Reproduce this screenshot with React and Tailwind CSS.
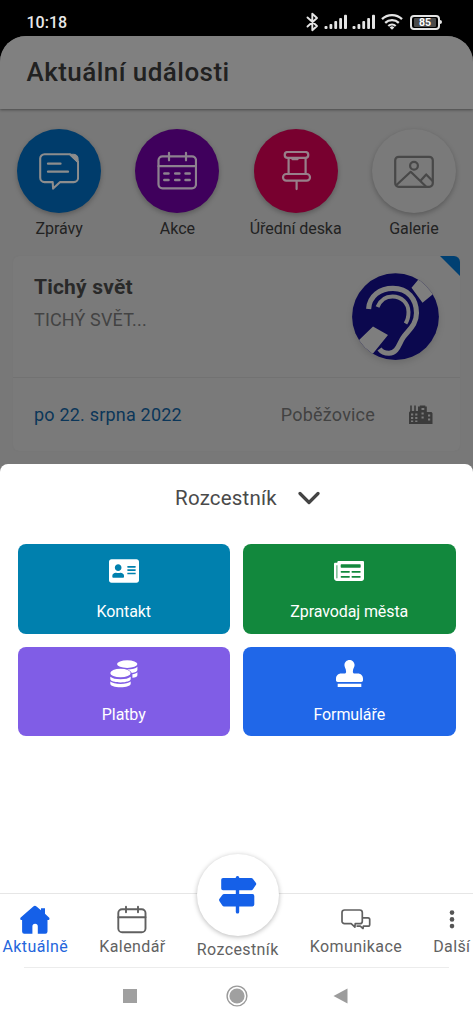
import { FaAddressCard, FaNewspaper, FaStamp } from "react-icons/fa";

const SignalIcon = () => (
  <svg width="24" height="16" viewBox="0 0 24 16" fill="#e4e4e4">
    <rect x="0.5" y="12" width="3" height="3" rx="1" />
    <rect x="5.5" y="10" width="2.8" height="5" rx="1" />
    <rect x="10.3" y="7" width="2.8" height="8" rx="1" />
    <rect x="15.2" y="4" width="2.8" height="11" rx="1" />
    <rect x="20" y="0.8" width="3" height="14.2" rx="1" />
  </svg>
);

const BluetoothIcon = () => (
  <svg width="13" height="20" viewBox="0 0 13 20" fill="none" stroke="#e4e4e4" strokeWidth="1.9" strokeLinejoin="round" strokeLinecap="round">
    <path d="M1.5 5.5 11 14 6.3 18.2V1.8L11 6 1.5 14.5" />
  </svg>
);

const WifiIcon = () => (
  <svg width="22" height="16" viewBox="0 0 22 16" fill="none" stroke="#e4e4e4" strokeWidth="2.3">
    <path d="M1 5.2a14.5 14.5 0 0 1 20 0M4.2 8.8a10 10 0 0 1 13.6 0M7.3 12a5.6 5.6 0 0 1 7.4 0" />
    <path d="M11 15.8 8.7 13.4a3.2 3.2 0 0 1 4.6 0z" fill="#e4e4e4" stroke="none" />
  </svg>
);

const NewsIcon = () => (
  <svg width="40" height="40" viewBox="0 0 40 40" fill="none" stroke="#8d8d8d" strokeWidth="2.1" strokeLinecap="round" strokeLinejoin="round">
    <path d="M31 3.3H5.5A4.3 4.3 0 0 0 1.2 7.6v19.2a4.3 4.3 0 0 0 4.3 4.3h8.2l.4 6.5 7-6.5h13.7a4.3 4.3 0 0 0 4.3-4.3V11z" />
    <path d="M30.5 3.3h4.3a4.3 4.3 0 0 1 4.3 4.3v4z" fill="#8d8d8d" strokeWidth="1" />
    <path d="M9 12.7h12.5M9 20.7h20" strokeWidth="2.3" />
  </svg>
);

const EventsIcon = () => (
  <svg width="40" height="40" viewBox="0 0 40 40" fill="none" stroke="#8d818f" strokeWidth="2.2" strokeLinecap="round">
    <rect x="1.5" y="5.3" width="37.5" height="32" rx="4" />
    <path d="M1.5 15.2H39M12 1.8v7.5M29 1.8v7.5" />
    <path d="M7.3 22.4h4.2M18.2 22.4h4.2M28.5 22.4h4.2M7.3 29h4.2M18.2 29h4.2M28.5 29h4.2" strokeWidth="2.5" />
  </svg>
);

const PinIcon = () => (
  <svg width="40" height="40" viewBox="0 0 40 40" fill="none" stroke="#98808a" strokeWidth="2.2" strokeLinecap="round">
    <rect x="8.7" y="1" width="23.6" height="5.8" rx="2.9" />
    <path d="M12.6 7v15.6M29.6 7v15.6M16.5 8.2h5M20.6 30.5v7.6" />
    <rect x="7" y="23" width="27" height="6.6" rx="3.3" />
  </svg>
);

const GalleryIcon = () => (
  <svg width="40" height="40" viewBox="0 0 40 40" fill="none" stroke="#484848" strokeWidth="2.2" strokeLinejoin="round">
    <rect x="1.2" y="5.8" width="37.6" height="30" rx="3.5" />
    <circle cx="20" cy="14.8" r="3.9" />
    <path d="M2.2 34.2 16.7 20.8 32 35.5M26.5 29.7l5.7-6.3 6.4 6.5" />
  </svg>
);

const EarIcon = () => (
  <svg width="88" height="88" viewBox="0 0 88 88" className="drop-shadow-md">
    <clipPath id="ear">
      <circle cx="43.5" cy="43.7" r="43.4" />
    </clipPath>
    <g clipPath="url(#ear)">
      <path d="M0 0h88v88H0z" fill="#0b084e" />
      <path d="m59.5 14.7 10-12L83 19.5 70.5 29.8zM4 70l17-16.5L36 62 19 83z" fill="#7e7e7e" />
      <g fill="none" stroke="#7e7e7e">
        <path d="M16.6 36C17.5 23 28 15.4 41 15.4 56 15.4 64.5 26 64.5 40c0 12-8 17-13 24C47 70 46 80.2 37 80.2c-5 0-7.5-1.5-9.5-4.2" strokeWidth="5.1" />
        <path d="M25.5 34c3-7.5 8.5-10.6 15-10.6 9 0 16 6.6 16 15.6 0 5-1 8.5-3 11.5" strokeWidth="4" />
      </g>
    </g>
  </svg>
);

const CityIcon = () => (
  <svg width="24" height="20" viewBox="0 0 24 20">
    <path d="M0 19V7.5L1.2 6V.5h1.6V6h2.4V.5h1.6V6H9V1.500h1.800V.5h5.500v1h1.500V7h4.700l1 1.200V19z" fill="#3b3b3b" />
    <path d="M2 8.500h2.200v2H2zM6.200 8.500h2.200v2H6.200zM2 12h2.200v2H2zM6.200 12h2.200v2H6.200zM2 15.500h2.200v1.500H2zM6.200 15.500h2.200v1.500H6.200zM12.500 3h2.800v2h-2.800zM12.500 7.500h2.200v2h-2.200zM12.500 11.500h2.200v2h-2.200zM19 9.500h2.200v2H19zM19 13.500h2.200v2H19z" fill="#7a7a7a" />
  </svg>
);

const CoinsIcon = () => (
  <svg width="28" height="28" viewBox="0 0 28 28" fill="#fff">
    <ellipse cx="17.2" cy="4.1" rx="10.2" ry="3.8" />
    <path d="M27.4 6.800v3.100c0 1.500-2.300 2.600-5.600 3-1-1.700-2.700-2.700-5-3.300 5 .1 8.800-1 10.600-2.800zM27.400 12.200v3c0 1.300-1.900 2.200-5 2.600v-3.500c2.200-.4 4-1.100 5-2.100z" />
    <ellipse cx="10.5" cy="13" rx="10.2" ry="4.3" />
    <path d="M.3 16.700c2 1.700 5.600 2.500 10.200 2.500s8.200-.8 10.200-2.500v2.400c0 2-4.500 3.400-10.200 3.400S.3 21.100.3 19.100zM.3 21.500c2 1.600 5.600 2.400 10.200 2.400s8.200-.8 10.200-2.400v2.300c0 2-4.500 3.500-10.200 3.500S.3 25.800.3 23.800z" />
  </svg>
);

const HomeIcon = () => (
  <svg width="30" height="30" viewBox="0 0 30 30" fill="#1560e8">
    <path d="M13.3 1.500a2.300 2.300 0 0 1 3.200 0l4.500 3.800V3.200h4v5.600l4 3.800c1 1 .4 2.400-1 2.400h-.5v11.500a2.200 2.200 0 0 1-2.200 2.200H17.800v-7.200a2.700 2.700 0 0 0-5.400 0v7.200H4.300a2.200 2.200 0 0 1-2.200-2.200V15h-.5c-1.300 0-1.800-1.500-.9-2.400z" />
  </svg>
);

const CalendarIcon = () => (
  <svg width="30" height="30" viewBox="0 0 30 30" fill="none" stroke="#606060" strokeWidth="1.9" strokeLinecap="round">
    <rect x="1.3" y="4.3" width="27.2" height="23" rx="3.8" />
    <path d="M1.3 12.300h27.200M9 1.800v5.500M21 1.800v5.500" />
  </svg>
);

const ChatIcon = () => (
  <svg width="30" height="30" viewBox="0 0 30 30" fill="none" stroke="#606060" strokeWidth="1.7" strokeLinejoin="round">
    <path d="M3.500 5h15.200c1.500 0 2.600 1 2.600 2.500v8.700c0 1.500-1 2.500-2.500 2.500h-4.600l-.3 3.400-3.700-3.400H3.500A2.500 2.500 0 0 1 1 16.200V7.500C1 6 2 5 3.500 5z" />
    <path d="M21.300 12.800h5.700c1 0 1.700.7 1.700 1.700v5c0 1-.7 1.700-1.700 1.700h-4.600l-.4 2.300-2.700-2.300h-3.800" />
  </svg>
);

const SignpostIcon = () => (
  <svg width="40" height="40" viewBox="0 0 40 40" fill="#1560e8">
    <rect x="17.8" y="1" width="3.4" height="37.5" rx="1.5" />
    <path d="M5 3h28.300a2 2 0 0 1 1.500.7l3 4a2 2 0 0 1 0 2.400l-3 4.500a2 2 0 0 1-1.500.7H5a1.800 1.800 0 0 1-1.800-1.800V4.800A1.800 1.800 0 0 1 5 3zM34.500 19.100H6a2 2 0 0 0-1.500.7l-3 4a2 2 0 0 0 0 2.400l3 4.500a2 2 0 0 0 1.500.7h28.500a1.800 1.800 0 0 0 1.800-1.800v-8.700a1.800 1.800 0 0 0-1.800-1.800z" />
  </svg>
);

const DotsIcon = () => (
  <svg width="8" height="30" viewBox="0 0 8 30" fill="#555">
    <circle cx="4" cy="7.6" r="2.3" />
    <circle cx="4" cy="14.4" r="2.3" />
    <circle cx="4" cy="21.1" r="2.3" />
  </svg>
);

const categories = [
  { label: "Zprávy", color: "bg-[#003c6b]", icon: <NewsIcon /> },
  { label: "Akce", color: "bg-[#3f005c]", icon: <EventsIcon /> },
  { label: "Úřední deska", color: "bg-[#78002f]", icon: <PinIcon /> },
  { label: "Galerie", color: "bg-[#7a7a7a]", icon: <GalleryIcon /> },
];

const tiles = [
  { label: "Kontakt", color: "bg-[#0080ae]", icon: <FaAddressCard size={30} /> },
  { label: "Zpravodaj města", color: "bg-[#12883d]", icon: <FaNewspaper size={30} /> },
  { label: "Platby", color: "bg-[#805de6]", icon: <CoinsIcon /> },
  { label: "Formuláře", color: "bg-[#2067e8]", icon: <FaStamp size={27} /> },
];

function StatusBar() {
  return (
    <div className="flex h-9 shrink-0 items-start justify-between pl-[26.5px] pr-[31px] pt-3">
      <span className="pt-px text-base font-medium leading-5 text-[#e8e8e8]">10:18</span>
      <div className="flex items-center">
        <BluetoothIcon />
        <div className="ml-[5px] flex gap-1">
          <SignalIcon />
          <SignalIcon />
        </div>
        <div className="ml-[5px]">
          <WifiIcon />
        </div>
        <div className="ml-[7px] flex h-[15px] w-[30px] items-center justify-center rounded-[4px] border-2 border-[#e4e4e4] p-[2px]">
          <span className="w-full rounded-[1px] bg-[#4a4a4a] text-center text-[10.5px] font-bold leading-[9px] text-white">85</span>
        </div>
        <div className="h-1 w-0.5 rounded-r bg-[#e4e4e4]" />
      </div>
    </div>
  );
}

function EventCard() {
  return (
    <div className="mx-[13px] mt-[17px] h-[195px] rounded-md bg-[#7a7a7a] shadow-[0_0_2px_rgba(0,0,0,0.04)]">
      <div className="relative flex h-[122px] justify-between overflow-hidden rounded-tr-md border-b border-[#727272] pl-[21px] pr-5">
        <div className="pt-[17px]">
          <h2 className="text-[21px] font-bold leading-7 tracking-[0.2px] text-[#292929]">Tichý svět</h2>
          <p className="mt-[5px] text-[18px] leading-7 tracking-[0.15px] text-[#434343]">TICHÝ SVĚT...</p>
        </div>
        <div className="pt-[17px]">
          <EarIcon />
        </div>
        <svg className="absolute right-0 top-0" width="20" height="20" viewBox="0 0 20 20">
          <path d="M0 0h20v20z" fill="#004072" />
        </svg>
      </div>
      <div className="flex h-[74px] items-center pl-[21px] pr-[27px] text-[18px] tracking-[0.2px]">
        <span className="text-[#0b3659]">po 22. srpna 2022</span>
        <span className="ml-auto mr-[34px] text-[#424242]">Poběžovice</span>
        <CityIcon />
      </div>
    </div>
  );
}

function NavItem({ icon, label, active }) {
  return (
    <div className="flex flex-col items-center pt-[11px]">
      {icon}
      <span
        className={
          active
            ? "mt-0.5 whitespace-nowrap text-base leading-5 tracking-[0.4px] text-[#2466dc]"
            : "mt-0.5 whitespace-nowrap text-base leading-5 tracking-[0.4px] text-[#626262]"
        }
      >
        {label}
      </span>
    </div>
  );
}

function BottomNav() {
  return (
    <nav className="flex h-[74px] justify-between border-t border-[#e6e6e6] px-[2.5px]">
      <NavItem icon={<HomeIcon />} label="Aktuálně" active />
      <NavItem icon={<CalendarIcon />} label="Kalendář" />
      <div className="-mt-10 flex flex-col items-center">
        <div className="flex size-[82px] items-center justify-center rounded-full bg-white shadow-[0_1px_5px_rgba(0,0,0,0.28)]">
          <SignpostIcon />
        </div>
        <span className="mt-1 whitespace-nowrap text-base leading-5 tracking-[0.4px] text-[#626262]">Rozcestník</span>
      </div>
      <NavItem icon={<ChatIcon />} label="Komunikace" />
      <NavItem icon={<DotsIcon />} label="Další" />
    </nav>
  );
}

function SystemBar() {
  return (
    <div className="h-[57px]">
      <div className="mx-6 h-px bg-[#ececec]" />
      <div className="flex h-14 items-center pl-[123px]">
        <div className="size-[14px] bg-[#a0a0a0]" />
        <svg className="ml-[88.5px]" width="22" height="22" viewBox="0 0 22 22">
          <circle cx="11" cy="11" r="9.9" fill="none" stroke="#9a9a9a" strokeWidth="1.4" />
          <circle cx="11" cy="11" r="7.6" fill="#a0a0a0" />
        </svg>
        <svg className="ml-[85.5px]" width="15" height="16" viewBox="0 0 15 16">
          <path d="M14.500.5v15L.5 8z" fill="#9c9c9c" />
        </svg>
      </div>
    </div>
  );
}

export default function App() {
  return (
    <div className="flex h-[1024px] w-[473px] flex-col overflow-hidden bg-black font-['Roboto',sans-serif]">
      <StatusBar />

      <div className="h-[428px] shrink-0 rounded-t-[26px] bg-[#787878]">
        <header className="flex h-[73px] items-center rounded-t-[26px] bg-[#808080] pl-[26.5px] shadow-[0_1px_3px_rgba(0,0,0,0.4)]">
          <h1 className="text-[26px] font-medium tracking-[0.45px] text-[#212121]">Aktuální události</h1>
        </header>

        <div className="grid grid-cols-4 pt-[19.5px]">
          {categories.map((item) => (
            <div key={item.label} className="flex flex-col items-center">
              <div className={`flex size-[84px] items-center justify-center rounded-full shadow-[0_2px_5px_rgba(0,0,0,0.25)] ${item.color}`}>
                {item.icon}
              </div>
              <span className="mt-1.5 whitespace-nowrap text-base leading-5 tracking-[-0.05px] text-[#222]">{item.label}</span>
            </div>
          ))}
        </div>

        <EventCard />
      </div>

      {/* bottom sheet */}
      <div className="bg-[#787878]">
        <div className="flex h-[429px] flex-col rounded-t-lg bg-white">
          <div className="flex h-[68px] items-center justify-center gap-[21px] pl-[22px]">
            <span className="text-[20.5px] tracking-[0.2px] text-[#4a4a4a]">Rozcestník</span>
            <svg width="22" height="14" viewBox="0 0 22 14" fill="none" stroke="#444" strokeWidth="3.2" strokeLinecap="round" strokeLinejoin="round">
              <path d="m2 2.500 9 9 9-9" />
            </svg>
          </div>
          <div className="grid grid-cols-2 gap-[13px] px-[17.5px] pt-3">
            {tiles.map((tile) => (
              <div key={tile.label} className={`flex h-[89.5px] flex-col items-center rounded-lg text-white ${tile.color}`}>
                <div className="mt-3 flex h-[30px] items-center">{tile.icon}</div>
                <span className="mt-4 text-base leading-5 tracking-[-0.1px]">{tile.label}</span>
              </div>
            ))}
          </div>
        </div>
      </div>

      <div className="grow bg-white">
        <BottomNav />
        <SystemBar />
      </div>
    </div>
  );
}
